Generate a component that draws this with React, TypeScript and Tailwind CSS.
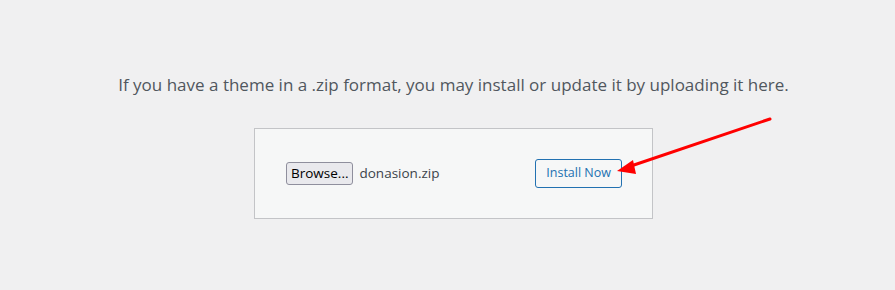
export default function App() {
  return (
    <div className="relative h-[290px] w-[895px] bg-[#f0f0f1] font-['Segoe_UI','Open_Sans','Liberation_Sans',sans-serif] text-[#3c434a]">
      <div className="flex flex-col items-center pl-[12px] pt-[72px]">
        <p className="text-[17px] leading-[26px] text-[#50575e]">
          If you have a theme in a .zip format, you may install or update it by uploading it here.
        </p>
        <div className="mt-[30px] flex h-[91px] w-[399px] items-center justify-between border border-[#c3c4c7] bg-[#f6f7f7] pl-[31px] pr-[30px]">
          <div className="flex items-center gap-[6px]">
            <button className="h-[23px] rounded-[3px] border border-[#8f8f9d] bg-[#e9e9ed] px-[4px] text-[13.5px] leading-none text-black">
              Browse...
            </button>
            <span className="text-[13.5px] text-[#3c434a]">donasion.zip</span>
          </div>
          <button className="h-[29px] rounded-[3px] border border-[#2271b1] bg-[#f6f7f7] px-[10px] text-[12.5px] leading-none text-[#2271b1]">
            Install Now
          </button>
        </div>
      </div>
      <svg className="absolute left-0 top-0" width="895" height="290">
        <line x1="770" y1="119" x2="628" y2="167" stroke="#ff0000" strokeWidth="3" strokeLinecap="round" />
        <polygon points="617,171 633,160 636,174" fill="#ff0000" />
      </svg>
    </div>
  );
}
